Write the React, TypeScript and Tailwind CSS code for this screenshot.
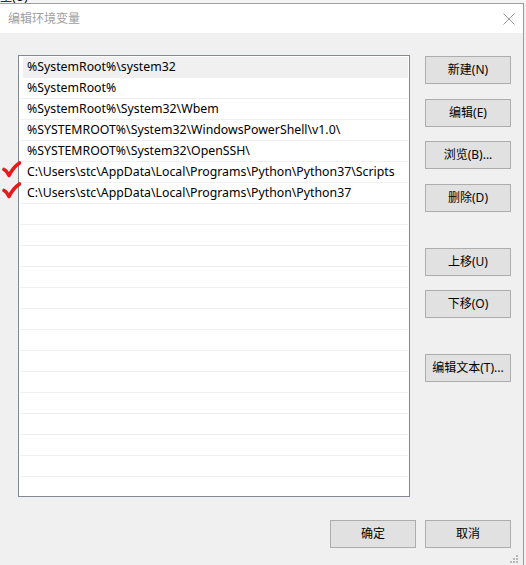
import React from "react";

const rows = [
  "%SystemRoot%\\system32",
  "%SystemRoot%",
  "%SystemRoot%\\System32\\Wbem",
  "%SYSTEMROOT%\\System32\\WindowsPowerShell\\v1.0\\",
  "%SYSTEMROOT%\\System32\\OpenSSH\\",
  "C:\\Users\\stc\\AppData\\Local\\Programs\\Python\\Python37\\Scripts",
  "C:\\Users\\stc\\AppData\\Local\\Programs\\Python\\Python37",
];

const font = { fontFamily: '"Noto Sans", "Noto Sans CJK SC", sans-serif' };

function Btn({ label, className = "" }: { label: string; className?: string }) {
  return (
    <div
      className={`w-[86px] h-[28px] bg-[#e1e1e1] border border-[#adadad] flex items-center justify-center text-[12px] text-black ${className}`}
    >
      {label}
    </div>
  );
}

function Check() {
  return (
    <svg width="19" height="17" viewBox="0 0 19 17">
      <path
        d="M2 8.5 C4 9.5 5.5 11.5 7 14.5 C9.5 9.5 13 5 17.5 2"
        fill="none"
        stroke="#e51a1a"
        strokeWidth="3.6"
        strokeLinecap="round"
        strokeLinejoin="round"
      />
    </svg>
  );
}

export default function App() {
  const total = 21;
  return (
    <div className="w-[526px] h-[565px] bg-[#f0f0f0] overflow-hidden flex flex-col" style={font}>
      <div className="h-[3px] bg-[#f4f4f4] overflow-hidden shrink-0">
        <div className="text-[12px] leading-[12px] -mt-[9px] text-black">量(U)</div>
      </div>
      <div className="h-[30px] bg-white border-t border-[#a0a0a0] border-r border-r-[#9a9a9a] mr-[2px] flex items-center justify-between shrink-0">
        <span className="pl-[8px] text-[12px] text-[#a0a0a0]">编辑环境变量</span>
        <svg width="12" height="12" viewBox="0 0 12 12" className="mr-[8px]">
          <path d="M0.5 0.5 L11.5 11.5 M11.5 0.5 L0.5 11.5" stroke="#9a9a9a" strokeWidth="1" />
        </svg>
      </div>
      <div className="flex-1 flex flex-col border-r border-[#9a9a9a] mr-[2px] relative">
        <div className="flex pt-[22px]">
          <div className="relative ml-[18px] w-[392px] h-[442px] bg-white border border-[#828790] pt-[1px] pl-[1px] pr-[1px] overflow-hidden">
            {Array.from({ length: total }).map((_, i) => (
              <div
                key={i}
                className={`h-[21px] border-b border-[#f0f0f0] flex items-center text-[12.3px] text-black whitespace-nowrap ${
                  i === 0 ? "bg-[#f0f0f0] ml-[3px] pl-[4px]" : "pl-[7px]"
                }`}
              >
                {rows[i] ?? ""}
              </div>
            ))}
          </div>
          <div className="ml-[15px] flex flex-col pt-[1px]">
            <Btn label="新建(N)" />
            <Btn label="编辑(E)" className="mt-[15px]" />
            <Btn label="浏览(B)..." className="mt-[14px]" />
            <Btn label="删除(D)" className="mt-[15px]" />
            <Btn label="上移(U)" className="mt-[36px]" />
            <Btn label="下移(O)" className="mt-[14px]" />
            <Btn label="编辑文本(T)..." className="mt-[36px]" />
          </div>
        </div>
        <div className="flex justify-end gap-[9px] mt-[23px] pr-[12px]">
          <Btn label="确定" />
          <Btn label="取消" />
        </div>
        <div className="absolute left-[2px] top-[128px]">
          <Check />
        </div>
        <div className="absolute left-[2px] top-[149px]">
          <Check />
        </div>
        <svg className="absolute right-[5px] bottom-[2px]" width="8" height="8" viewBox="0 0 8 8">
          <rect x="6" y="0" width="2" height="2" fill="#b8b8b8" />
          <rect x="3" y="3" width="2" height="2" fill="#b8b8b8" />
          <rect x="6" y="3" width="2" height="2" fill="#b8b8b8" />
          <rect x="0" y="6" width="2" height="2" fill="#b8b8b8" />
          <rect x="3" y="6" width="2" height="2" fill="#b8b8b8" />
          <rect x="6" y="6" width="2" height="2" fill="#b8b8b8" />
        </svg>
      </div>
    </div>
  );
}
